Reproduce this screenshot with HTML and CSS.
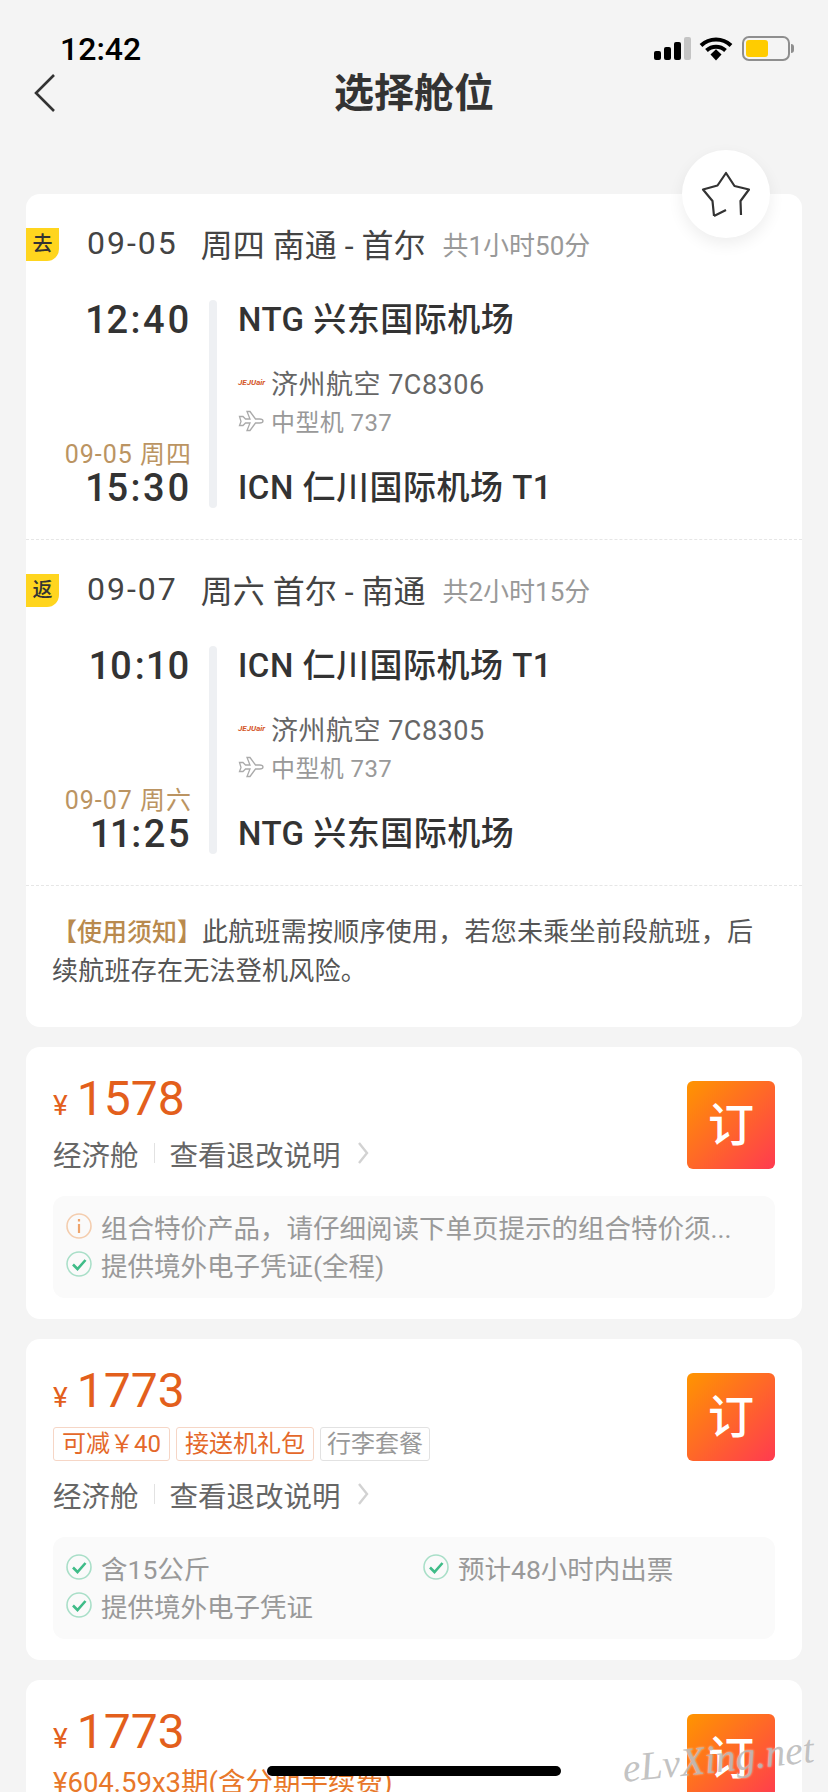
FILE: index.html
```html
<!DOCTYPE html>
<html lang="zh-CN">
<head>
  <meta charset="UTF-8" />
  <meta name="viewport" content="width=device-width, initial-scale=1.0"/>
  <title>选择舱位</title>
  <link rel="stylesheet" href="styles.css">
</head>
<body>
  <svg class="defs" width="0" height="0">
    <symbol id="check" viewBox="0 0 26 26">
      <circle cx="13" cy="13" r="12" fill="none" stroke="#a9dfc8" stroke-width="1.6"/>
      <path d="M7 13.500l4.500 4.500L19.500 9" fill="none" stroke="#3fbc88" stroke-width="2.600"/>
    </symbol>
    <symbol id="info" viewBox="0 0 26 26">
      <circle cx="13" cy="13" r="12" fill="none" stroke="#f4cdae" stroke-width="1.6"/>
      <path d="M13 6v2.600M13 11v9" fill="none" stroke="#eea46c" stroke-width="2.200"/>
    </symbol>
    <symbol id="plane" viewBox="0 0 26 22">
      <path d="M1.500 6.500l3.500 0 2.500 2.500 4.500 0-3-7.500 3 0 5.500 7.500 4 0c2 0 3.500 1 3.500 2s-1.500 2-3.500 2l-4 0-5.500 7.500-3 0 3-7.500-4.500 0-2.500 2.500-3.500 0 1.500-4z" fill="none" stroke="#aaa" stroke-width="1.300"/>
    </symbol>
    <symbol id="chev" viewBox="0 0 12 24">
      <path d="M2 2l8 10-8 10" fill="none" stroke="#d2d2d2" stroke-width="2.400"/>
    </symbol>
  </svg>

  <div class="page">
    <div class="status">
      <span class="clock">12:42</span>
      <div class="status-icons">
        <div class="signal"><i></i><i></i><i></i><i class="off"></i></div>
        <svg class="wifi" width="34" height="25" viewBox="0 0 34 25">
          <path d="M2 9.500C10.500 1.500 23.500 1.500 32 9.500" fill="none" stroke="#000" stroke-width="4"/>
          <path d="M7.500 14.500C13 9.500 21 9.500 26.500 14.500" fill="none" stroke="#000" stroke-width="4"/>
          <path d="M11.500 18.500L17 13.300 22.500 18.500 17 24.500z" fill="#000"/>
        </svg>
        <div class="battery"><div class="battery-fill"></div></div>
        <div class="battery-nub"></div>
      </div>
    </div>

    <div class="nav">
      <svg class="back" width="24" height="40" viewBox="0 0 24 40">
        <path d="M21 2L3 20l18 18" fill="none" stroke="#333" stroke-width="2.600"/>
      </svg>
      <h1>选择舱位</h1>
    </div>

    <div class="card flights">
      <div class="fav">
        <svg width="50" height="47" viewBox="0 0 50 47">
          <path d="M13 45L11.500 30 2 18.500 16.500 14.500 25 2 33.500 15 48 18.500 39.500 30 40 44M13 45l12-6" fill="none" stroke="#333" stroke-width="2.200" stroke-linejoin="round"/>
        </svg>
      </div>

      <div class="segment">
        <div class="seg-head">
          <span class="seg-tag">去</span>
          <span class="seg-date">09-05</span>
          <span class="seg-route">周四 南通 - 首尔</span>
          <span class="seg-total">共1小时50分</span>
        </div>
        <div class="seg-body">
          <div class="times">
            <div class="time">12:40</div>
            <div class="arrive">
              <div class="arrive-date">09-05 周四</div>
              <div class="time">15:30</div>
            </div>
          </div>
          <div class="seg-bar"></div>
          <div class="stops">
            <div class="airport">NTG 兴东国际机场</div>
            <div class="flight-info">
              <div class="airline"><span class="logo">JEJUair</span>济州航空 7C8306</div>
              <div class="aircraft"><svg class="plane"><use href="#plane"/></svg>中型机 737</div>
            </div>
            <div class="airport">ICN 仁川国际机场 T1</div>
          </div>
        </div>
      </div>

      <div class="segment">
        <div class="seg-head">
          <span class="seg-tag">返</span>
          <span class="seg-date">09-07</span>
          <span class="seg-route">周六 首尔 - 南通</span>
          <span class="seg-total">共2小时15分</span>
        </div>
        <div class="seg-body">
          <div class="times">
            <div class="time">10:10</div>
            <div class="arrive">
              <div class="arrive-date">09-07 周六</div>
              <div class="time">11:25</div>
            </div>
          </div>
          <div class="seg-bar"></div>
          <div class="stops">
            <div class="airport">ICN 仁川国际机场 T1</div>
            <div class="flight-info">
              <div class="airline"><span class="logo">JEJUair</span>济州航空 7C8305</div>
              <div class="aircraft"><svg class="plane"><use href="#plane"/></svg>中型机 737</div>
            </div>
            <div class="airport">NTG 兴东国际机场</div>
          </div>
        </div>
      </div>

      <p class="notice"><b>【使用须知】</b>此航班需按顺序使用，若您未乘坐前段航班，后续航班存在无法登机风险。</p>
    </div>

    <div class="card fare">
      <div class="fare-top">
        <div class="fare-main">
          <div class="price"><small>¥</small>1578</div>
          <div class="cabin">
            <span>经济舱</span><span class="cabin-sep"></span><span>查看退改说明</span>
            <svg class="chev"><use href="#chev"/></svg>
          </div>
        </div>
        <div class="book">订</div>
      </div>
      <div class="perks">
        <div class="perk wide"><svg class="perk-icon"><use href="#info"/></svg>组合特价产品，请仔细阅读下单页提示的组合特价须...</div>
        <div class="perk wide"><svg class="perk-icon"><use href="#check"/></svg>提供境外电子凭证(全程)</div>
      </div>
    </div>

    <div class="card fare">
      <div class="fare-top">
        <div class="fare-main">
          <div class="price"><small>¥</small>1773</div>
          <div class="tags">
            <span class="tag">可减￥40</span>
            <span class="tag">接送机礼包</span>
            <span class="tag gray">行李套餐</span>
          </div>
          <div class="cabin">
            <span>经济舱</span><span class="cabin-sep"></span><span>查看退改说明</span>
            <svg class="chev"><use href="#chev"/></svg>
          </div>
        </div>
        <div class="book">订</div>
      </div>
      <div class="perks">
        <div class="perk"><svg class="perk-icon"><use href="#check"/></svg>含15公斤</div>
        <div class="perk"><svg class="perk-icon"><use href="#check"/></svg>预计48小时内出票</div>
        <div class="perk wide"><svg class="perk-icon"><use href="#check"/></svg>提供境外电子凭证</div>
      </div>
    </div>

    <div class="card fare">
      <div class="fare-top">
        <div class="fare-main">
          <div class="price"><small>¥</small>1773</div>
          <div class="installment">¥604.59x3期(含分期手续费)</div>
        </div>
        <div class="book">订</div>
      </div>
    </div>

    <div class="home-bar"></div>
    <div class="watermark">eLvXing.net</div>
  </div>
</body>
</html>
```

FILE: styles.css
```css
html, body {
  margin: 0;
  padding: 0;
}

body {
  font-family: Roboto, "Noto Sans CJK SC", sans-serif;
  background-color: #f4f4f4;
  color: #333;
}

.defs {
  display: block;
  height: 0;
}

.page {
  position: relative;
  height: 1792px;
  overflow: hidden;
}

/* status bar */
.status {
  height: 68px;
  box-sizing: border-box;
  padding: 30px 34px 0 60px;
  display: flex;
  justify-content: space-between;
}

.clock {
  font-size: 32px;
  line-height: 38px;
  font-weight: 500;
  color: #000;
}

.status-icons {
  display: flex;
  align-items: center;
  height: 38px;
  margin-top: -1px;
}

.signal {
  display: flex;
  align-items: flex-end;
  gap: 3px;
  height: 23px;
  margin-right: 8px;
}

.signal i {
  display: block;
  width: 7px;
  border-radius: 2px;
  background: #000;
}

.signal i:nth-child(1) { height: 9px; }
.signal i:nth-child(2) { height: 13px; }
.signal i:nth-child(3) { height: 18px; }
.signal i:nth-child(4) { height: 23px; }
.signal i.off { background: #c4c4c4; }

.wifi {
  margin-right: 9px;
}

.battery {
  width: 48px;
  height: 25px;
  box-sizing: border-box;
  border: 2px solid #8e8e8e;
  border-radius: 7px;
  padding: 2px;
}

.battery-fill {
  width: 22px;
  height: 100%;
  border-radius: 3px;
  background: #ffcc00;
}

.battery-nub {
  width: 3px;
  height: 9px;
  margin-left: 1px;
  border-radius: 0 3px 3px 0;
  background: #8e8e8e;
}

/* nav */
.nav {
  position: relative;
  height: 50px;
  display: flex;
  align-items: center;
  justify-content: center;
}

.nav h1 {
  margin: 0 0 7px 0;
  font-size: 40px;
  font-weight: 700;
  color: #333;
}

.back {
  position: absolute;
  left: 33px;
  top: 5px;
}

/* cards */
.card {
  position: relative;
  margin: 0 26px 20px 26px;
  background: #fff;
  border-radius: 14px;
}

.flights {
  margin-top: 76px;
}

.fav {
  position: absolute;
  top: -44px;
  right: 32px;
  width: 88px;
  height: 88px;
  border-radius: 50%;
  background: #fff;
  box-shadow: 0 6px 16px rgba(0, 0, 0, 0.07);
  display: flex;
  align-items: center;
  justify-content: center;
}

.segment {
  padding: 30px 0 31px 0;
  border-bottom: 1px dashed #e6e6e6;
}

.seg-head {
  display: flex;
  align-items: center;
  height: 40px;
  font-size: 32px;
  color: #444;
}

.seg-head span:not(.seg-tag) {
  margin-bottom: 2px;
}

.seg-tag {
  width: 33px;
  height: 33px;
  border-radius: 0 0 12px 0;
  background: #ffd51e;
  color: #333;
  font-size: 20px;
  font-weight: 500;
  line-height: 33px;
  text-align: center;
  margin-right: 28px;
}

.seg-date {
  letter-spacing: 2px;
  margin-right: 23px;
}

.seg-route {
  margin-right: 17px;
}

.seg-total {
  font-size: 26px;
  color: #999;
}

.seg-body {
  display: flex;
  height: 208px;
  margin-top: 36px;
}

.times {
  width: 166px;
  display: flex;
  flex-direction: column;
  justify-content: space-between;
  text-align: right;
}

.time {
  font-size: 38px;
  line-height: 40px;
  font-weight: 500;
  font-variant-numeric: proportional-nums;
  letter-spacing: 2.500px;
  color: #333;
}

.arrive-date {
  font-size: 25px;
  line-height: 27px;
  letter-spacing: 1px;
  color: #bb9462;
}

.seg-bar {
  width: 8px;
  margin-left: 17px;
  border-radius: 4px;
  background: #eef0f3;
}

.stops {
  margin-left: 21px;
  display: flex;
  flex-direction: column;
  justify-content: space-between;
}

.airport {
  font-size: 33px;
  line-height: 40px;
  font-weight: 500;
  letter-spacing: 0.500px;
  color: #333;
}

.flight-info {
  margin-bottom: 5px;
}

.airline, .aircraft {
  display: flex;
  align-items: center;
  height: 38px;
  font-size: 27px;
  letter-spacing: 0.500px;
  color: #666;
}

.aircraft {
  font-size: 24px;
  letter-spacing: 0.400px;
  color: #999;
}

.logo {
  width: 33px;
  font-size: 8px;
  font-weight: 700;
  font-style: italic;
  letter-spacing: 0;
  color: #d4572a;
}

.plane {
  width: 26px;
  height: 22px;
  margin-right: 7px;
}

.notice {
  margin: 0;
  padding: 27px 26px 36px 26px;
  font-size: 26px;
  line-height: 39px;
  letter-spacing: 0.250px;
  color: #555;
}

.notice b {
  font-weight: 500;
  font-size: 25px;
  letter-spacing: 0;
  color: #b98a4e;
}

/* fare cards */
.fare {
  padding: 24px 27px 21px 27px;
}

.fare-top {
  display: flex;
  justify-content: space-between;
}

.price {
  height: 52px;
  padding-top: 2px;
  font-size: 48px;
  line-height: 52px;
  color: #e35f1c;
}

.price small {
  font-size: 28px;
  margin-right: 9px;
}

.cabin {
  display: flex;
  align-items: center;
  height: 40px;
  margin-top: 8px;
  font-size: 28.500px;
  color: #666;
}

.tags + .cabin {
  margin-top: 13px;
}

.cabin-sep {
  width: 1px;
  height: 20px;
  margin: 0 15px;
  background: #e2e2e2;
}

.chev {
  width: 12px;
  height: 24px;
  margin-left: 16px;
}

.tags {
  display: flex;
  gap: 6px;
  margin-top: 10px;
}

.tag {
  height: 34px;
  box-sizing: border-box;
  padding: 0 8px;
  border: 1px solid #f6d6c6;
  border-radius: 3px;
  font-size: 24px;
  line-height: 32px;
  color: #e4682a;
}

.tag.gray {
  padding: 0 6px;
  border-color: #e2e2e2;
  color: #999;
}

.book {
  width: 88px;
  height: 88px;
  margin-top: 10px;
  border-radius: 6px;
  background: linear-gradient(135deg, #ff9500, #ff3a50);
  color: #fff;
  font-size: 46px;
  font-weight: 500;
  line-height: 88px;
  text-align: center;
}

.perks {
  display: grid;
  grid-template-columns: 357px 1fr;
  margin-top: 23px;
  padding: 11px 13px 15px 13px;
  border-radius: 12px;
  background: #fafafa;
}

.perk {
  display: flex;
  align-items: center;
  height: 38px;
  font-size: 26.500px;
  color: #999;
  white-space: nowrap;
}

.perk.wide {
  grid-column: 1 / -1;
}

.perk-icon {
  width: 26px;
  height: 26px;
  margin-right: 9px;
  flex-shrink: 0;
}

.installment {
  margin-top: 5px;
  font-size: 27.500px;
  line-height: 40px;
  color: #e8782a;
}

/* overlays */
.home-bar {
  position: absolute;
  left: 267px;
  top: 1766px;
  width: 294px;
  height: 10px;
  border-radius: 5px;
  background: #000;
}

.watermark {
  position: absolute;
  left: 622px;
  top: 1735px;
  font-family: "Liberation Serif", serif;
  font-style: italic;
  font-size: 40px;
  color: rgba(175, 175, 175, 0.75);
  text-shadow: 0 0 2px rgba(255, 255, 255, 0.7);
  transform: rotate(-6deg);
}
```
